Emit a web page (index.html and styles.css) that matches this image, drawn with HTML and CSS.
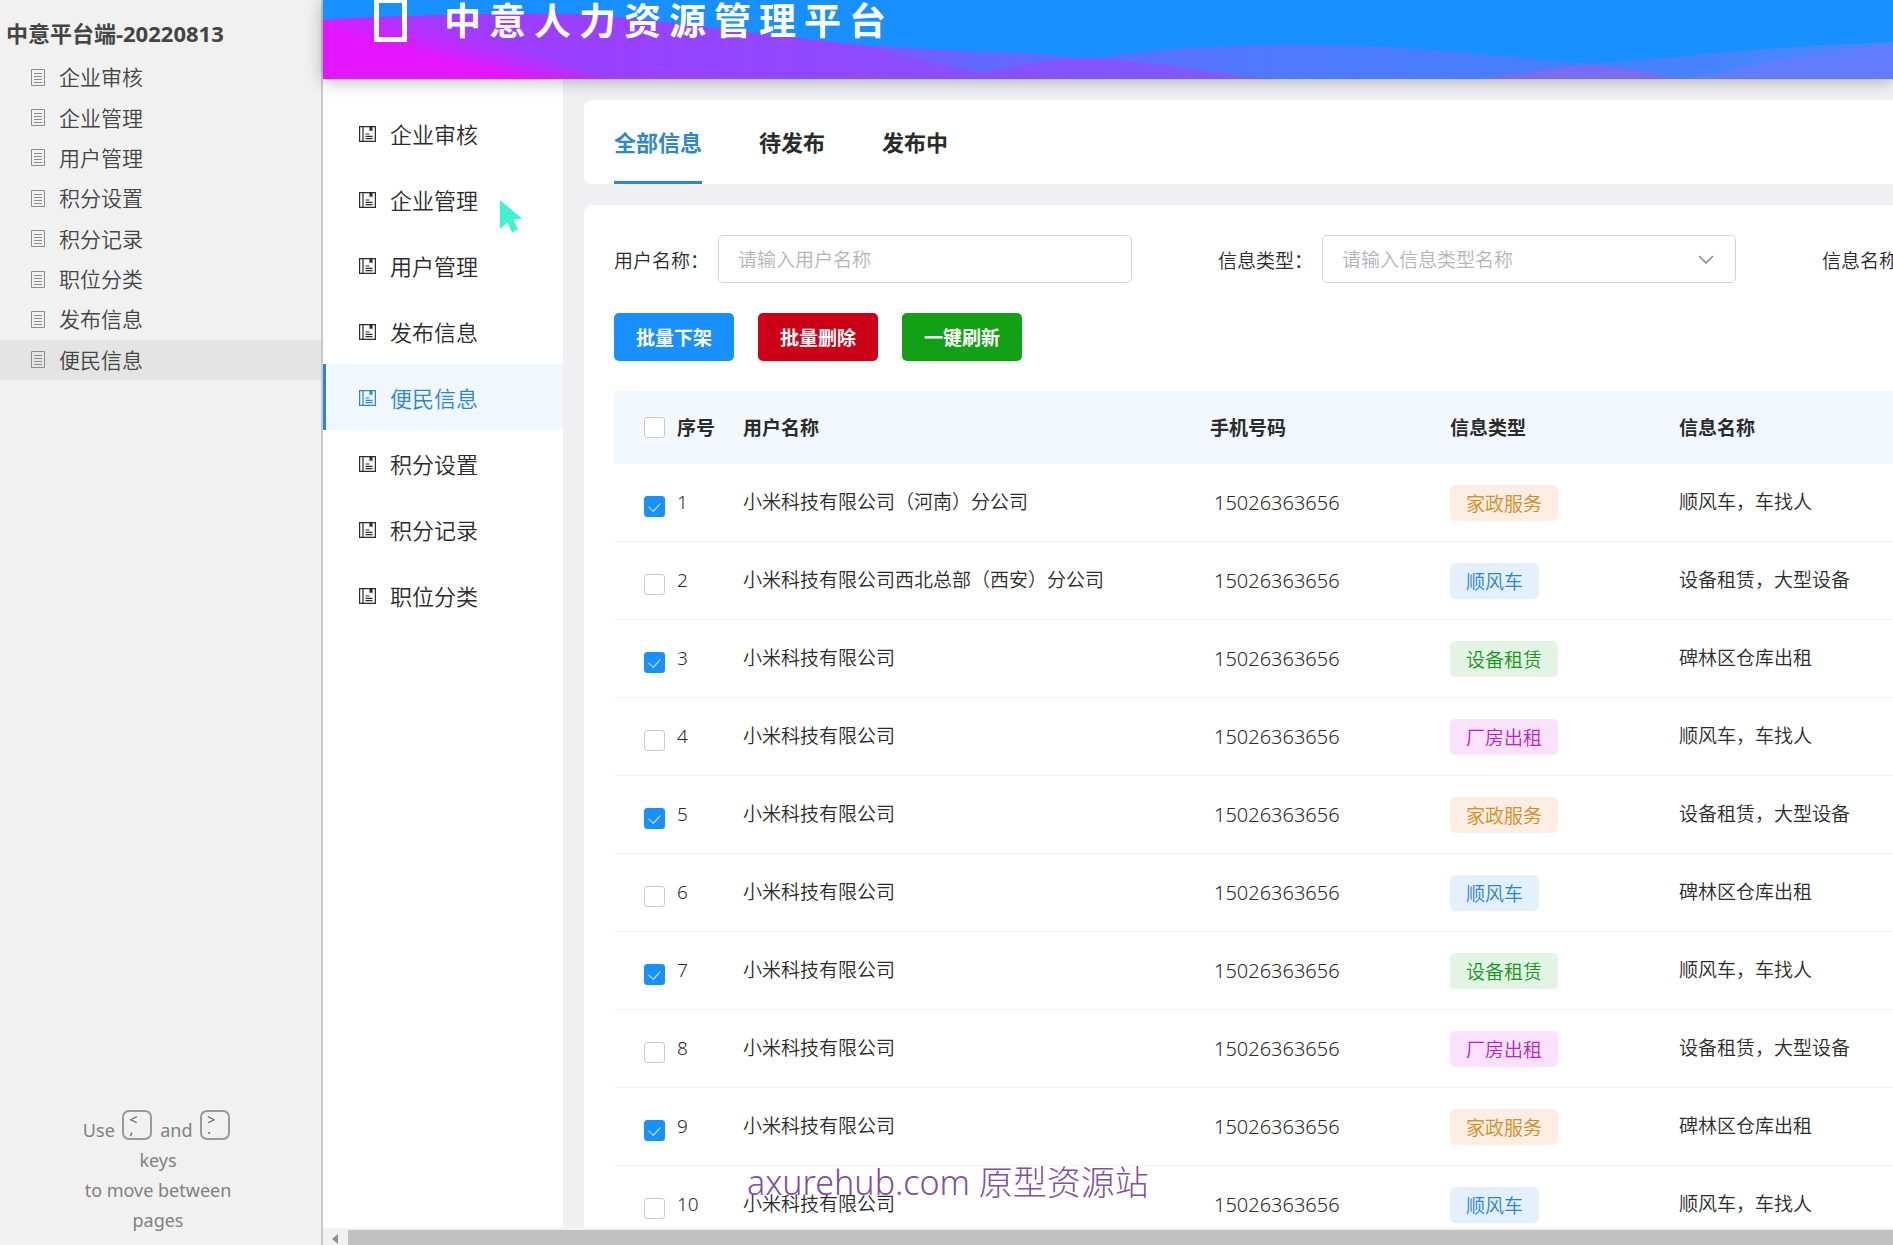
FILE: index.html
```html
<!DOCTYPE html>
<html lang="zh-CN">
<head>
<meta charset="utf-8">
<title>中意人力资源管理平台</title>
<link rel="stylesheet" href="styles.css">
</head>
<body>
<svg class="sprite" aria-hidden="true">
  <symbol id="page" viewBox="0 0 14 17"><path d="M.5.5h13v16H.5zM3 4.500h8M3 7.500h8M3 10.500h8M3 13.500h8" fill="none" stroke="currentColor"/></symbol>
  <symbol id="book" viewBox="0 0 17 16"><path d="M.6.6h15.800v14.800H.6zM4 .6v14.800" fill="none" stroke="currentColor" stroke-width="1.200"/><path d="M10.500 1h3v4.500l-1.500-1.200-1.500 1.200z" fill="currentColor"/><path d="M6.500 8h4M6.500 10.300h7M6.500 12.600h7" stroke="currentColor" stroke-width="1.200"/></symbol>
</svg>

<aside class="sitemap">
  <h1 class="sitemap-title">中意平台端-20220813</h1>
  <nav class="page-list">
    <a href="#"><svg class="page-icon"><use href="#page"/></svg>企业审核</a>
    <a href="#"><svg class="page-icon"><use href="#page"/></svg>企业管理</a>
    <a href="#"><svg class="page-icon"><use href="#page"/></svg>用户管理</a>
    <a href="#"><svg class="page-icon"><use href="#page"/></svg>积分设置</a>
    <a href="#"><svg class="page-icon"><use href="#page"/></svg>积分记录</a>
    <a href="#"><svg class="page-icon"><use href="#page"/></svg>职位分类</a>
    <a href="#"><svg class="page-icon"><use href="#page"/></svg>发布信息</a>
    <a href="#" class="current"><svg class="page-icon"><use href="#page"/></svg>便民信息</a>
  </nav>
  <p class="key-hint">Use <kbd><span>&lt;</span><span>,</span></kbd> and <kbd><span>&gt;</span><span>.</span></kbd><br>keys<br>to move between<br>pages</p>
</aside>

<div class="frame">
  <header class="banner">
    <svg class="waves" viewBox="0 0 1570 79" preserveAspectRatio="none" aria-hidden="true">
      <defs>
        <linearGradient id="w1" gradientUnits="userSpaceOnUse" x1="0" x2="1570" y1="0" y2="0"><stop offset="0" stop-color="#d81cff"/><stop offset=".1" stop-color="#a23aff"/><stop offset=".33" stop-color="#8a50ff"/><stop offset=".42" stop-color="#6368ff"/><stop offset=".6" stop-color="#5078ff"/><stop offset=".8" stop-color="#4480ff"/><stop offset="1" stop-color="#4a88ff"/></linearGradient>
        <linearGradient id="w2" gradientUnits="userSpaceOnUse" x1="0" x2="950" y1="0" y2="0"><stop offset="0" stop-color="#b832ff"/><stop offset=".15" stop-color="#a03cff"/><stop offset=".5" stop-color="#9048ff"/><stop offset="1" stop-color="#7c5cff"/></linearGradient>
        <linearGradient id="w3" gradientUnits="userSpaceOnUse" x1="100" y1="62" x2="110" y2="22"><stop offset=".2" stop-color="#e415ff"/><stop offset="1" stop-color="#c428ff" stop-opacity="0"/></linearGradient>
      </defs>
      <path fill="url(#w1)" d="M0 20C60 16 140 14 247 14C330 18 400 30 477 40C550 47 630 51 697 53C735 54 755 60 780 57C830 51 880 45 967 45C1090 44 1190 58 1267 64C1350 58 1450 46 1570 42V79H0z"/>
      <path fill="url(#w2)" d="M0 24C80 14 170 13 247 14C360 22 430 34 540 45C590 58 620 68 660 72C700 66 735 57 773 59C840 62 890 73 940 79H0z"/>
      <path fill="url(#w3)" d="M0 21C50 19 100 19 150 30C190 48 240 68 290 79H0z"/>
      <path fill="#7a6cf0" d="M1160 79C1200 74 1240 66 1267 65C1300 67 1330 74 1360 79z"/>
      <path fill="#607cff" d="M1360 79C1420 68 1460 54 1570 44V79z"/>
    </svg>
    <span class="logo" aria-hidden="true"></span>
    <strong class="brand">中意人力资源管理平台</strong>
  </header>

  <div class="workspace">
    <nav class="menu">
      <a href="#"><svg class="book-icon"><use href="#book"/></svg>企业审核</a>
      <a href="#"><svg class="book-icon"><use href="#book"/></svg>企业管理</a>
      <a href="#"><svg class="book-icon"><use href="#book"/></svg>用户管理</a>
      <a href="#"><svg class="book-icon"><use href="#book"/></svg>发布信息</a>
      <a href="#" class="active"><svg class="book-icon"><use href="#book"/></svg>便民信息</a>
      <a href="#"><svg class="book-icon"><use href="#book"/></svg>积分设置</a>
      <a href="#"><svg class="book-icon"><use href="#book"/></svg>积分记录</a>
      <a href="#"><svg class="book-icon"><use href="#book"/></svg>职位分类</a>
    </nav>

    <main class="content">
      <div class="card tabs">
        <a href="#" class="selected">全部信息</a>
        <a href="#">待发布</a>
        <a href="#">发布中</a>
      </div>

      <section class="card listing">
        <form class="filters">
          <div class="field"><label for="user">用户名称：</label><input id="user" type="text" placeholder="请输入用户名称"></div>
          <div class="field"><label for="kind">信息类型：</label><div class="select"><select id="kind"><option>请输入信息类型名称</option></select><svg class="chevron" viewBox="0 0 16 10"><path d="M1 1l7 7 7-7" fill="none" stroke="#888" stroke-width="1.500"/></svg></div></div>
          <div class="field"><label for="name">信息名称：</label><input id="name" type="text"></div>
        </form>
        <div class="actions">
          <button type="button" class="blue">批量下架</button>
          <button type="button" class="red">批量删除</button>
          <button type="button" class="green">一键刷新</button>
        </div>
        <table>
          <colgroup><col class="c-no"><col class="c-user"><col class="c-phone"><col class="c-kind"><col></colgroup>
          <thead>
            <tr><th><label class="pick"><input type="checkbox">序号</label></th><th>用户名称</th><th>手机号码</th><th>信息类型</th><th>信息名称</th></tr>
          </thead>
          <tbody>
            <tr><td><label class="pick"><input type="checkbox" checked>1</label></td><td>小米科技有限公司（河南）分公司</td><td class="phone">15026363656</td><td><span class="tag orange">家政服务</span></td><td>顺风车，车找人</td></tr>
            <tr><td><label class="pick"><input type="checkbox">2</label></td><td>小米科技有限公司西北总部（西安）分公司</td><td class="phone">15026363656</td><td><span class="tag sky">顺风车</span></td><td>设备租赁，大型设备</td></tr>
            <tr><td><label class="pick"><input type="checkbox" checked>3</label></td><td>小米科技有限公司</td><td class="phone">15026363656</td><td><span class="tag lime">设备租赁</span></td><td>碑林区仓库出租</td></tr>
            <tr><td><label class="pick"><input type="checkbox">4</label></td><td>小米科技有限公司</td><td class="phone">15026363656</td><td><span class="tag pink">厂房出租</span></td><td>顺风车，车找人</td></tr>
            <tr><td><label class="pick"><input type="checkbox" checked>5</label></td><td>小米科技有限公司</td><td class="phone">15026363656</td><td><span class="tag orange">家政服务</span></td><td>设备租赁，大型设备</td></tr>
            <tr><td><label class="pick"><input type="checkbox">6</label></td><td>小米科技有限公司</td><td class="phone">15026363656</td><td><span class="tag sky">顺风车</span></td><td>碑林区仓库出租</td></tr>
            <tr><td><label class="pick"><input type="checkbox" checked>7</label></td><td>小米科技有限公司</td><td class="phone">15026363656</td><td><span class="tag lime">设备租赁</span></td><td>顺风车，车找人</td></tr>
            <tr><td><label class="pick"><input type="checkbox">8</label></td><td>小米科技有限公司</td><td class="phone">15026363656</td><td><span class="tag pink">厂房出租</span></td><td>设备租赁，大型设备</td></tr>
            <tr><td><label class="pick"><input type="checkbox" checked>9</label></td><td>小米科技有限公司</td><td class="phone">15026363656</td><td><span class="tag orange">家政服务</span></td><td>碑林区仓库出租</td></tr>
            <tr><td><label class="pick"><input type="checkbox">10</label></td><td>小米科技有限公司</td><td class="phone">15026363656</td><td><span class="tag sky">顺风车</span></td><td>顺风车，车找人</td></tr>
          </tbody>
        </table>
      </section>
    </main>
  </div>

  <div class="scrollbar" aria-hidden="true"><span class="arrow"></span><span class="thumb"></span></div>
</div>

<svg class="cursor" viewBox="0 0 24 34" aria-hidden="true"><path d="M1 1L23 19.500L14.500 21L19 30.500L13 33.500L8.500 23.500L1 30z" fill="#41f2d2"/></svg>
<div class="watermark">axurehub.com 原型资源站</div>
</body>
</html>
```
FILE: styles.css
```css
* { box-sizing: border-box; }

body {
  margin: 0;
  height: 100vh;
  display: flex;
  overflow: hidden;
  font: 350 19px/28px "Noto Sans", "Noto Sans CJK SC", sans-serif;
  color: #2b2b2b;
  background: #fff;
}

a { color: inherit; text-decoration: none; }
input, select, button { font: inherit; margin: 0; }
.sprite { position: absolute; width: 0; height: 0; }

/* site map */
.sitemap {
  flex: none;
  width: 323px;
  display: flex;
  flex-direction: column;
  background: #f1f1f1;
  border-right: 2px solid #c9c9c9;
  color: #444;
}
.sitemap-title {
  margin: 0;
  padding: 13px 6px 3px;
  font-size: 22px;
  line-height: 41px;
  font-weight: 700;
}
.page-list {
  display: grid;
  grid-auto-rows: 1fr;
  height: 323px;
  font-size: 21px;
}
.page-list a {
  display: flex;
  align-items: center;
  gap: 14px;
  padding-left: 31px;
}
.page-list .current { background: #e4e4e4; }
.page-icon { width: 14px; height: 17px; color: #8c8c8c; }
.key-hint {
  margin: auto 5px 10px 0;
  text-align: center;
  font-size: 18px;
  font-weight: 400;
  line-height: 30px;
  color: #808080;
}
kbd {
  display: inline-block;
  overflow: hidden;
  width: 30px;
  height: 30px;
  padding: 3px 0 0 5px;
  margin: 0 3px;
  border: 2px solid #999;
  border-radius: 7px;
  vertical-align: -3px;
  text-align: left;
  font: 14px/9px "Noto Sans", sans-serif;
  color: #555;
}
kbd span { display: block; }

/* banner */
.frame { flex: 1; min-width: 0; display: flex; flex-direction: column; }
.banner {
  position: relative;
  z-index: 1;
  flex: none;
  height: 79px;
  display: flex;
  align-items: flex-start;
  gap: 37px;
  padding-left: 51px;
  background: #1890ff;
  box-shadow: 0 2px 16px rgba(0, 0, 0, .3);
}
.waves { position: absolute; inset: 0; width: 100%; height: 100%; }
.logo {
  position: relative;
  width: 33px;
  height: 42px;
  border: 5px solid #fff;
  border-top-width: 3px;
}
.brand {
  position: relative;
  font-size: 37px;
  line-height: 42px;
  font-weight: 700;
  letter-spacing: 8px;
  color: #fff;
}

/* menu */
.workspace { flex: 1; min-height: 0; display: flex; overflow: hidden; background: #f0f0f2; }
.menu {
  flex: none;
  width: 240px;
  padding-top: 21px;
  background: #fff;
  font-size: 22px;
}
.menu a {
  display: flex;
  align-items: center;
  gap: 14px;
  height: 66px;
  padding: 1px 0 0 33px;
  border-left: 3px solid transparent;
}
.menu .active { background: #f0f7fd; border-color: #2f86cb; color: #2f86cb; }
.book-icon { width: 17px; height: 16px; }

/* content */
.content { flex: 1; min-width: 0; padding: 21px 0 0 21px; }
.card { background: #fff; border-radius: 8px 0 0 8px; padding-left: 30px; }
.tabs {
  display: flex;
  gap: 57px;
  height: 84px;
  margin-bottom: 21px;
  font-size: 22px;
  font-weight: 700;
}
.tabs a { line-height: 84px; height: 84px; }
.tabs .selected { color: #2f86cb; border-bottom: 3px solid #2f86cb; }

.listing { padding-top: 30px; overflow: hidden; }
.filters { display: flex; gap: 86px; }
.field { flex: none; display: flex; align-items: center; }
.field label { width: 104px; padding-top: 3px; white-space: nowrap; }
.field input, .field select {
  width: 414px;
  height: 48px;
  padding: 1px 19px 0;
  border: 1px solid #d5d5d9;
  border-radius: 5px;
  background: #fff;
  color: #b4b4bc;
}
.field ::placeholder { color: #b4b4bc; }
.select { position: relative; }
.select select { appearance: none; }
.chevron { position: absolute; right: 22px; top: 20px; width: 16px; height: 10px; pointer-events: none; }

.actions { display: flex; gap: 24px; padding: 30px 0; }
.actions button {
  width: 120px;
  height: 48px;
  padding: 1px 0 0;
  border: 0;
  border-radius: 5px;
  color: #fff;
  font-weight: 700;
}
.blue { background: #1890ff; }
.red { background: #cc0017; }
.green { background: #12a114; }

table { width: 100%; table-layout: fixed; border-collapse: separate; border-spacing: 0; }
.c-no { width: 129px; }
.c-user { width: 467px; }
.c-phone { width: 240px; }
.c-kind { width: 229px; }
th, td { padding: 0; text-align: left; white-space: nowrap; }
th { height: 73px; background: #f3f8fe; font-weight: 700; }
td { height: 78px; line-height: 77px; vertical-align: top; border-bottom: 1px solid #f3f3f5; }
td.phone { padding-left: 4px; font-size: 20px; }
.pick { display: flex; align-items: center; gap: 12px; padding-left: 30px; }
.pick input {
  flex: none;
  appearance: none;
  width: 21px;
  height: 21px;
  border: 1px solid #c9c9ce;
  border-radius: 3px;
  background: #fff;
}
td .pick input { margin-top: 8px; }
.pick input:checked { background: #1890ff; border-color: #1890ff; }
.pick input:checked::after {
  content: "";
  display: block;
  width: 6px;
  height: 10px;
  margin: 3px auto 0;
  border: solid #d8ecff;
  border-width: 0 1px 1px 0;
  transform: rotate(42deg);
}
.tag {
  display: block;
  width: fit-content;
  margin-top: 21px;
  padding: 2px 16px 0;
  border-radius: 5px;
  line-height: 34px;
}
.orange { background: #fdeee3; color: #d98a1e; }
.sky { background: #e4f1fd; color: #2585d6; }
.lime { background: #e2f4e3; color: #17951c; }
.pink { background: #fae2ff; color: #b81fcb; }

/* horizontal scrollbar */
.scrollbar { position: relative; z-index: 1; flex: none; height: 17px; display: flex; align-items: flex-end; background: #f1f1f1; }
.arrow { width: 25px; height: 11px; flex: none; }
.arrow::before {
  content: "";
  display: block;
  margin-left: 9px;
  width: 0;
  border: 5px solid transparent;
  border-left-width: 0;
  border-right: 6px solid #8f8f8f;
}
.thumb { flex: 1; height: 15px; background: #c1c1c1; }

/* overlays */
.cursor { position: absolute; left: 499px; top: 199px; width: 24px; height: 34px; z-index: 3; }
.watermark {
  position: absolute;
  left: 747px;
  top: 1159px;
  z-index: 3;
  font-size: 34px;
  font-weight: 300;
  line-height: 46px;
  color: #7f50a4;
  white-space: nowrap;
}
```
